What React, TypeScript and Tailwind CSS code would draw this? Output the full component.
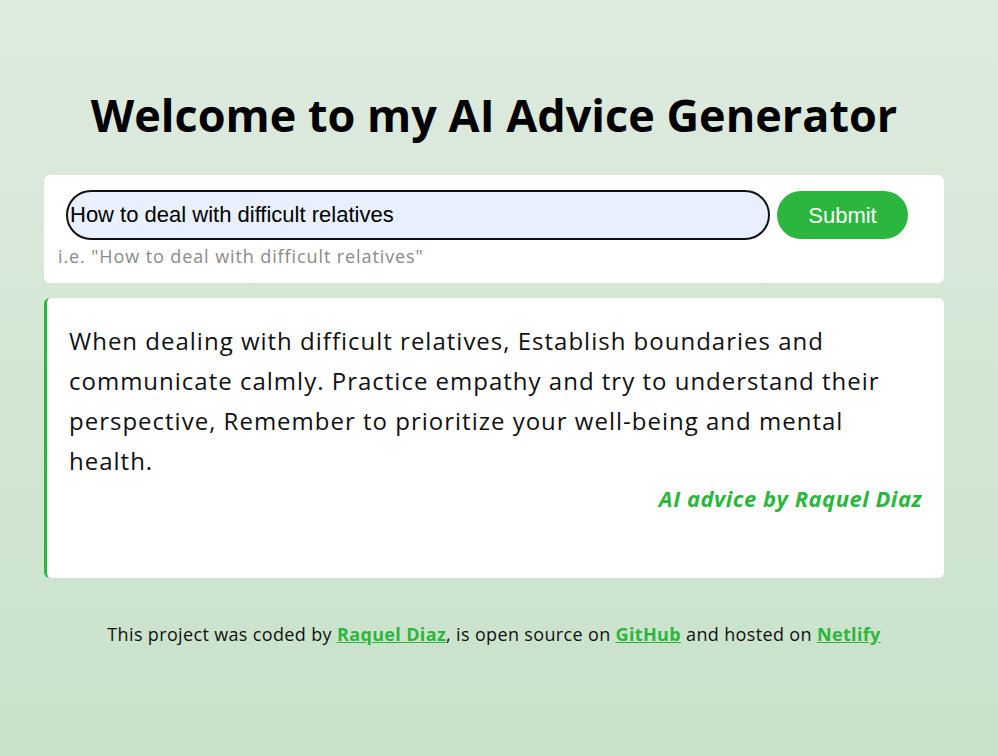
import React, { useState } from 'react';

const App: React.FC = () => {
  const [query, setQuery] = useState('How to deal with difficult relatives');

  return (
    <div
      className="min-h-[756px] w-full bg-gradient-to-b from-[#deebdf] to-[#c8e2c9] pt-[86px] text-[#111]"
      style={{ fontFamily: '"Open Sans", Lato, sans-serif' }}
    >
      <div className="ml-[44px] w-[900px]">
        <h1 className="text-center text-[45px] font-bold leading-[58px] text-black">
          Welcome to my AI Advice Generator
        </h1>

        {/* Form */}
        <form
          className="mt-[31px] h-[108px] rounded-md bg-white pl-[22px] pt-[15px]"
          onSubmit={(e) => e.preventDefault()}
        >
          <div className="flex items-center gap-[7px]">
            <input
              type="text"
              value={query}
              onChange={(e) => setQuery(e.target.value)}
              className="h-[50px] w-[704px] rounded-full border-2 border-[#111] bg-[#e8f0fe] px-[2px] text-[22px] text-black outline-none"
              style={{ fontFamily: '"Liberation Sans", Arial, sans-serif' }}
            />
            <button
              type="submit"
              className="h-[48px] w-[131px] rounded-full bg-[#2bb63d] text-[22px] text-white"
              style={{ fontFamily: '"Liberation Sans", Arial, sans-serif' }}
            >
              Submit
            </button>
          </div>
          <p className="mt-[4px] -ml-[8px] text-[18px] leading-[24px] tracking-[0.9px] text-[#8a8a8a]">
            i.e. "How to deal with difficult relatives"
          </p>
        </form>

        {/* Advice */}
        <div className="mt-[15px] h-[280px] rounded-md border-l-[3px] border-[#2bb63d] bg-white px-[22px] pt-[23px]">
          <p className="text-[24px] leading-[40px] tracking-[1px] text-[#111]">
            When dealing with difficult relatives, Establish boundaries and communicate calmly. Practice empathy and try to understand their perspective, Remember to prioritize your well-being and mental health.
          </p>
          <p className="mt-[2px] text-right text-[22px] font-bold italic leading-[30px] tracking-[0.5px] text-[#2bb63d]">
            AI advice by Raquel Diaz
          </p>
        </div>

        {/* Footer */}
        <p className="mt-[44px] text-center text-[18px] leading-[24px] tracking-[0.35px] text-[#111]">
          This project was coded by{' '}
          <a href="#" className="font-bold text-[#2bb63d] underline">Raquel Diaz</a>, is open source on{' '}
          <a href="#" className="font-bold text-[#2bb63d] underline">GitHub</a> and hosted on{' '}
          <a href="#" className="font-bold text-[#2bb63d] underline">Netlify</a>
        </p>
      </div>
    </div>
  );
};

export default App;
